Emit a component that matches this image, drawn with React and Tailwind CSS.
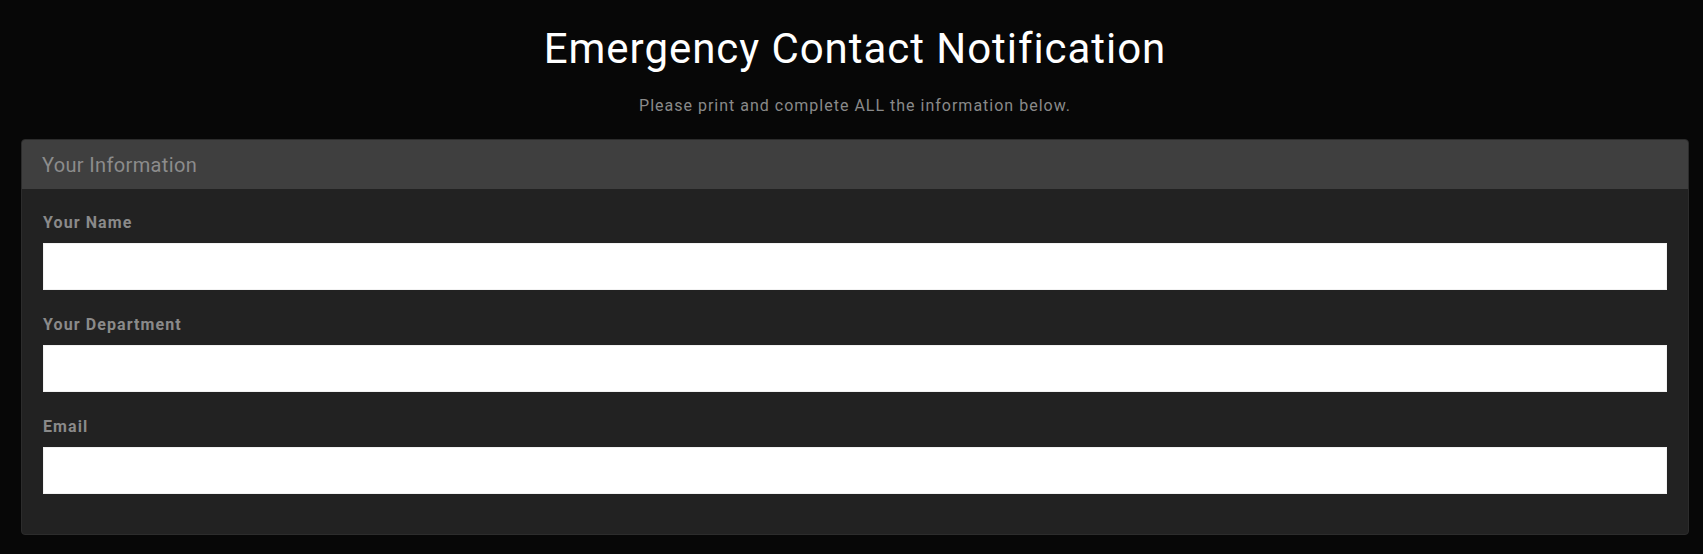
import React from 'react'

const fields = [
  { id: 'name', label: 'Your Name', type: 'text' },
  { id: 'department', label: 'Your Department', type: 'text' },
  { id: 'email', label: 'Email', type: 'email' },
]

export default function App() {
  return (
    <div
      className="min-h-[554px] w-full bg-[#070707] text-white"
      style={{ fontFamily: 'Roboto, "Liberation Sans", sans-serif' }}
    >
      <div className="ml-[21px] mr-[14px] pt-[26px]">
        {/* Heading */}
        <h1 className="text-center text-[42px] font-normal leading-[46px] tracking-[0.95px] text-white">
          Emergency Contact Notification
        </h1>
        <p className="mt-[22px] text-center text-[16px] leading-[24px] tracking-[1px] text-[#8a8a8a]">
          Please print and complete ALL the information below.
        </p>

        {/* Card */}
        <div className="mt-[21px] overflow-hidden rounded-[4px] border border-[#2c2c2c] bg-[#222222]">
          <div className="bg-[#3f3f3f] px-[20px] pt-[10px] pb-[9px] text-[20px] leading-[30px] tracking-[0.35px] text-[#8c8c8c]">
            Your Information
          </div>
          <div className="flex flex-col gap-[21px] px-[21px] pt-[20px] pb-[40px]">
            {fields.map((field) => (
              <div key={field.id} className="flex flex-col">
                <label
                  htmlFor={field.id}
                  className="mt-[2px] mb-[8px] text-[16px] font-bold leading-[24px] tracking-[1.1px] text-[#8a8a8a]"
                >
                  {field.label}
                </label>
                <input
                  id={field.id}
                  type={field.type}
                  className="h-[47px] w-full border border-[#f2f2f2] bg-white px-3 text-[16px] text-black outline-none"
                />
              </div>
            ))}
          </div>
        </div>
      </div>
    </div>
  )
}
